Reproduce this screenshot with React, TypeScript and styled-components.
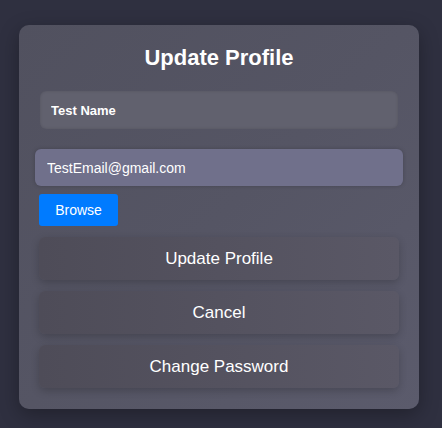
import styled, { createGlobalStyle } from "styled-components";

const GlobalStyle = createGlobalStyle`
  html, body {
    margin: 0;
    padding: 0;
    background: #2f3040;
    font-family: "Liberation Sans", Arial, sans-serif;
  }
`;

const Page = styled.div`
  width: 442px;
  height: 428px;
  padding: 25px 0 0 19px;
  box-sizing: border-box;
  display: flex;
  justify-content: flex-start;
  align-items: flex-start;
`;

const Card = styled.div`
  width: 400px;
  box-sizing: border-box;
  padding: 19px 20px 21px 20px;
  border-radius: 10px;
  background: linear-gradient(135deg, #51515f 0%, #555564 50%, #5b5b6c 100%);
  box-shadow: 0 6px 20px rgba(0, 0, 0, 0.3);
  display: flex;
  flex-direction: column;
`;

const Title = styled.h2`
  margin: 0 0 20px;
  text-align: center;
  color: #ffffff;
  font-size: 22px;
  font-weight: 700;
  line-height: 27px;
`;

const NameInput = styled.input`
  margin: 0 1px 0 1px;
  height: 38px;
  box-sizing: border-box;
  padding: 0 11px;
  border: none;
  border-radius: 6px;
  background: #61616e;
  color: #ffffff;
  font-family: "Liberation Sans", Arial, sans-serif;
  font-size: 13px;
  font-weight: 700;
  box-shadow: inset 0 0 3px rgba(0, 0, 0, 0.15);
  outline: none;
`;

const EmailInput = styled.input`
  margin: 20px -4px 0 -4px;
  height: 37px;
  box-sizing: border-box;
  padding: 0 12px;
  border: none;
  border-radius: 6px;
  background: #70708b;
  color: #ffffff;
  font-family: "Liberation Sans", Arial, sans-serif;
  font-size: 14px;
  box-shadow: 0 0 4px rgba(0, 0, 0, 0.2);
  outline: none;
`;

const BrowseButton = styled.button`
  align-self: flex-start;
  margin-top: 8px;
  width: 79px;
  height: 32px;
  border: none;
  border-radius: 3px;
  background: #007bff;
  color: #ffffff;
  font-family: "Liberation Sans", Arial, sans-serif;
  font-size: 14px;
  cursor: pointer;
`;

const Actions = styled.div`
  margin-top: 11px;
  display: flex;
  flex-direction: column;
  gap: 11px;
`;

const ActionButton = styled.button`
  height: 43px;
  border: none;
  border-radius: 6px;
  background: linear-gradient(90deg, #4e4c58 0%, #5a5866 100%);
  color: #ffffff;
  font-family: "Liberation Sans", Arial, sans-serif;
  font-size: 17px;
  box-shadow: 0 3px 8px rgba(0, 0, 0, 0.2);
  cursor: pointer;
`;

export default function App() {
  return (
    <>
      <GlobalStyle />
      <Page>
        <Card>
          <Title>Update Profile</Title>
          <NameInput defaultValue="Test Name" />
          <EmailInput defaultValue="TestEmail@gmail.com" />
          <BrowseButton>Browse</BrowseButton>
          <Actions>
            <ActionButton>Update Profile</ActionButton>
            <ActionButton>Cancel</ActionButton>
            <ActionButton>Change Password</ActionButton>
          </Actions>
        </Card>
      </Page>
    </>
  );
}
